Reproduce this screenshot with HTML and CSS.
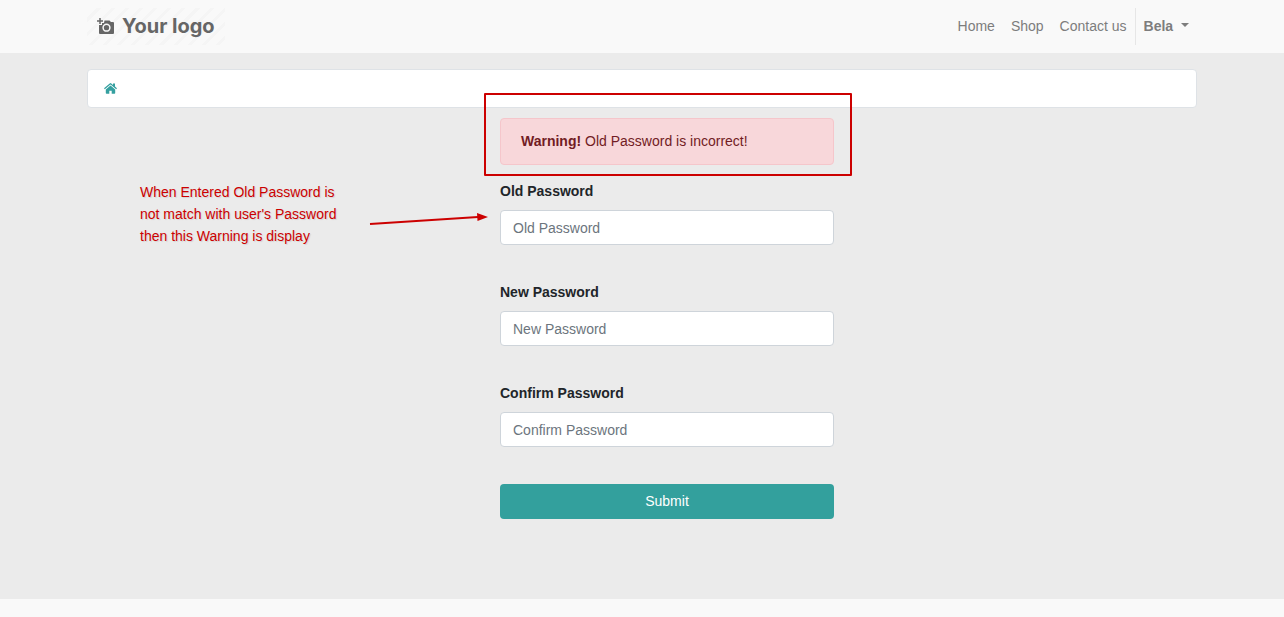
FILE: index.html
```html
<!DOCTYPE html>
<html lang="en">
<head>
  <meta charset="UTF-8">
  <meta name="viewport" content="width=device-width, initial-scale=1.0">
  <title>Change Password</title>
  <link rel="stylesheet" href="styles.css">
</head>
<body>
  <header class="header">
    <nav class="container navbar">
      <a class="brand" href="#">
        <svg class="brand-icon" viewBox="0 0 18 17" aria-hidden="true">
          <path d="M3 0v6M0 3h6" stroke="#666" stroke-width="1.500" fill="none"/>
          <path fill="#666" d="M7.500 2.500h5L14 4h2q1 0 1 1v10q0 1-1 1H3q-1 0-1-1V7h3V5h2z"/>
          <circle cx="9.500" cy="9.700" r="3.400" fill="none" stroke="#f9f9f9" stroke-width="1.500"/>
        </svg>
        <span>Your logo</span>
      </a>
      <ul class="menu">
        <li><a href="#">Home</a></li>
        <li><a href="#">Shop</a></li>
        <li><a href="#">Contact us</a></li>
        <li class="divider"></li>
        <li><button class="user-btn" type="button">Bela <span class="caret"></span></button></li>
      </ul>
    </nav>
  </header>

  <main class="main">
    <div class="container">
      <div class="breadcrumb">
        <a href="#" aria-label="Home">
          <svg class="home-icon" viewBox="0 0 13 11" aria-hidden="true">
            <path fill="#35a0a0" d="M6.500 2.500 11.200 6.400V10q0 .7-.7.700H7.700V7.700H5.300v3H2.500Q1.800 10.700 1.800 10V6.400z"/>
            <path fill="#35a0a0" d="M0 5.300 5.700.4q.8-.6 1.600 0L9 1.900V.5h2v3.100l2 1.700-.8 1-5.700-4.800L.8 6.300z"/>
          </svg>
        </a>
      </div>

      <div class="content">
        <p class="note">When Entered Old Password is<br>not match with user's Password<br>then this Warning is display</p>

        <form class="password-form">
          <div class="alert" role="alert"><strong>Warning!</strong> Old Password is incorrect!</div>
          <div class="form-group">
            <svg class="arrow" width="120" height="16" viewBox="0 0 120 16" aria-hidden="true">
              <path d="M1 13 109 6" stroke="#c00" stroke-width="2"/>
              <path d="M108 2l11 4-10.500 4z" fill="#c00"/>
            </svg>
            <label for="old-password">Old Password</label>
            <input type="password" id="old-password" placeholder="Old Password">
          </div>
          <div class="form-group">
            <label for="new-password">New Password</label>
            <input type="password" id="new-password" placeholder="New Password">
          </div>
          <div class="form-group">
            <label for="confirm-password">Confirm Password</label>
            <input type="password" id="confirm-password" placeholder="Confirm Password">
          </div>
          <button class="submit-btn" type="submit">Submit</button>
        </form>
      </div>
    </div>
  </main>

  <footer class="footer"></footer>
</body>
</html>
```
FILE: styles.css
```css
* { box-sizing: border-box; }
body {
  margin: 0;
  min-height: 100vh;
  display: flex;
  flex-direction: column;
  font-family: "Liberation Sans", Arial, sans-serif;
  font-size: 14px;
  line-height: 21px;
  color: #212529;
  background-color: #f9f9f9;
}
.container {
  width: 100%;
  max-width: 1140px;
  margin: 0 auto;
  padding: 0 15px;
}

/* Header */
.header { padding: 8px 0; }
.navbar {
  display: flex;
  justify-content: space-between;
  align-items: center;
}
.brand {
  display: flex;
  align-items: center;
  gap: 7px;
  height: 37px;
  padding: 0 10px 1px;
  color: #666;
  font-family: Inter, sans-serif;
  font-size: 20px;
  font-weight: 700;
  text-decoration: none;
  background: repeating-linear-gradient(135deg, #f9f9f9 0, #f9f9f9 7px, #f5f5f5 7px, #f5f5f5 10px);
}
.brand-icon { width: 18px; height: 17px; }
.menu {
  display: flex;
  margin: 0;
  padding: 0;
  list-style: none;
}
.menu a, .user-btn {
  display: block;
  padding: 8px;
  color: #7d7d7d;
  text-decoration: none;
}
.user-btn {
  border: none;
  background: none;
  font: inherit;
  font-weight: bold;
  cursor: pointer;
}
.divider { width: 1px; background-color: #e6e6e6; }
.caret {
  display: inline-block;
  margin-left: 4px;
  vertical-align: 4px;
  border-top: 4px solid #7d7d7d;
  border-left: 4px solid transparent;
  border-right: 4px solid transparent;
}

/* Main */
.main {
  padding: 16px 0 80px;
  background-color: #ebebeb;
}
.breadcrumb {
  display: flex;
  align-items: center;
  height: 39px;
  padding: 0 16px;
  background-color: #fff;
  border: 1px solid #dee2e6;
  border-radius: 4px;
}
.home-icon { display: block; width: 13px; height: 11px; }
.content {
  display: grid;
  grid-template-columns: 413fr 334fr 363fr;
  margin-top: 10px;
}
.note {
  margin: 63px 0 0;
  padding-left: 53px;
  color: #c00;
  line-height: 22px;
  text-shadow: 1px 1px 1px rgba(0, 0, 0, 0.1);
}

/* Form */
.alert {
  position: relative;
  margin-bottom: 16px;
  padding: 12px 20px;
  color: #721c24;
  background-color: #f8d7da;
  border: 1px solid #f5c6cb;
  border-radius: 4px;
}
.alert::after {
  content: "";
  position: absolute;
  top: -26px;
  right: -19px;
  bottom: -12px;
  left: -17px;
  border: 2px solid #c00;
  border-radius: 1px;
}
.form-group { position: relative; margin-bottom: 37px; }
.form-group label {
  display: block;
  margin-bottom: 8px;
  font-weight: bold;
}
.form-group input {
  display: block;
  width: 100%;
  height: 35px;
  padding: 6px 12px;
  font: inherit;
  color: #495057;
  background-color: #fff;
  border: 1px solid #ced4da;
  border-radius: 4px;
}
.form-group input::placeholder { color: #6c757d; }
.arrow {
  position: absolute;
  top: 30px;
  right: 100%;
  margin-right: 11px;
}
.submit-btn {
  display: block;
  width: 100%;
  height: 35px;
  font: inherit;
  color: #fff;
  background-color: #33a09d;
  border: none;
  border-radius: 4px;
  cursor: pointer;
}

.footer { flex: 1; min-height: 18px; }
```
